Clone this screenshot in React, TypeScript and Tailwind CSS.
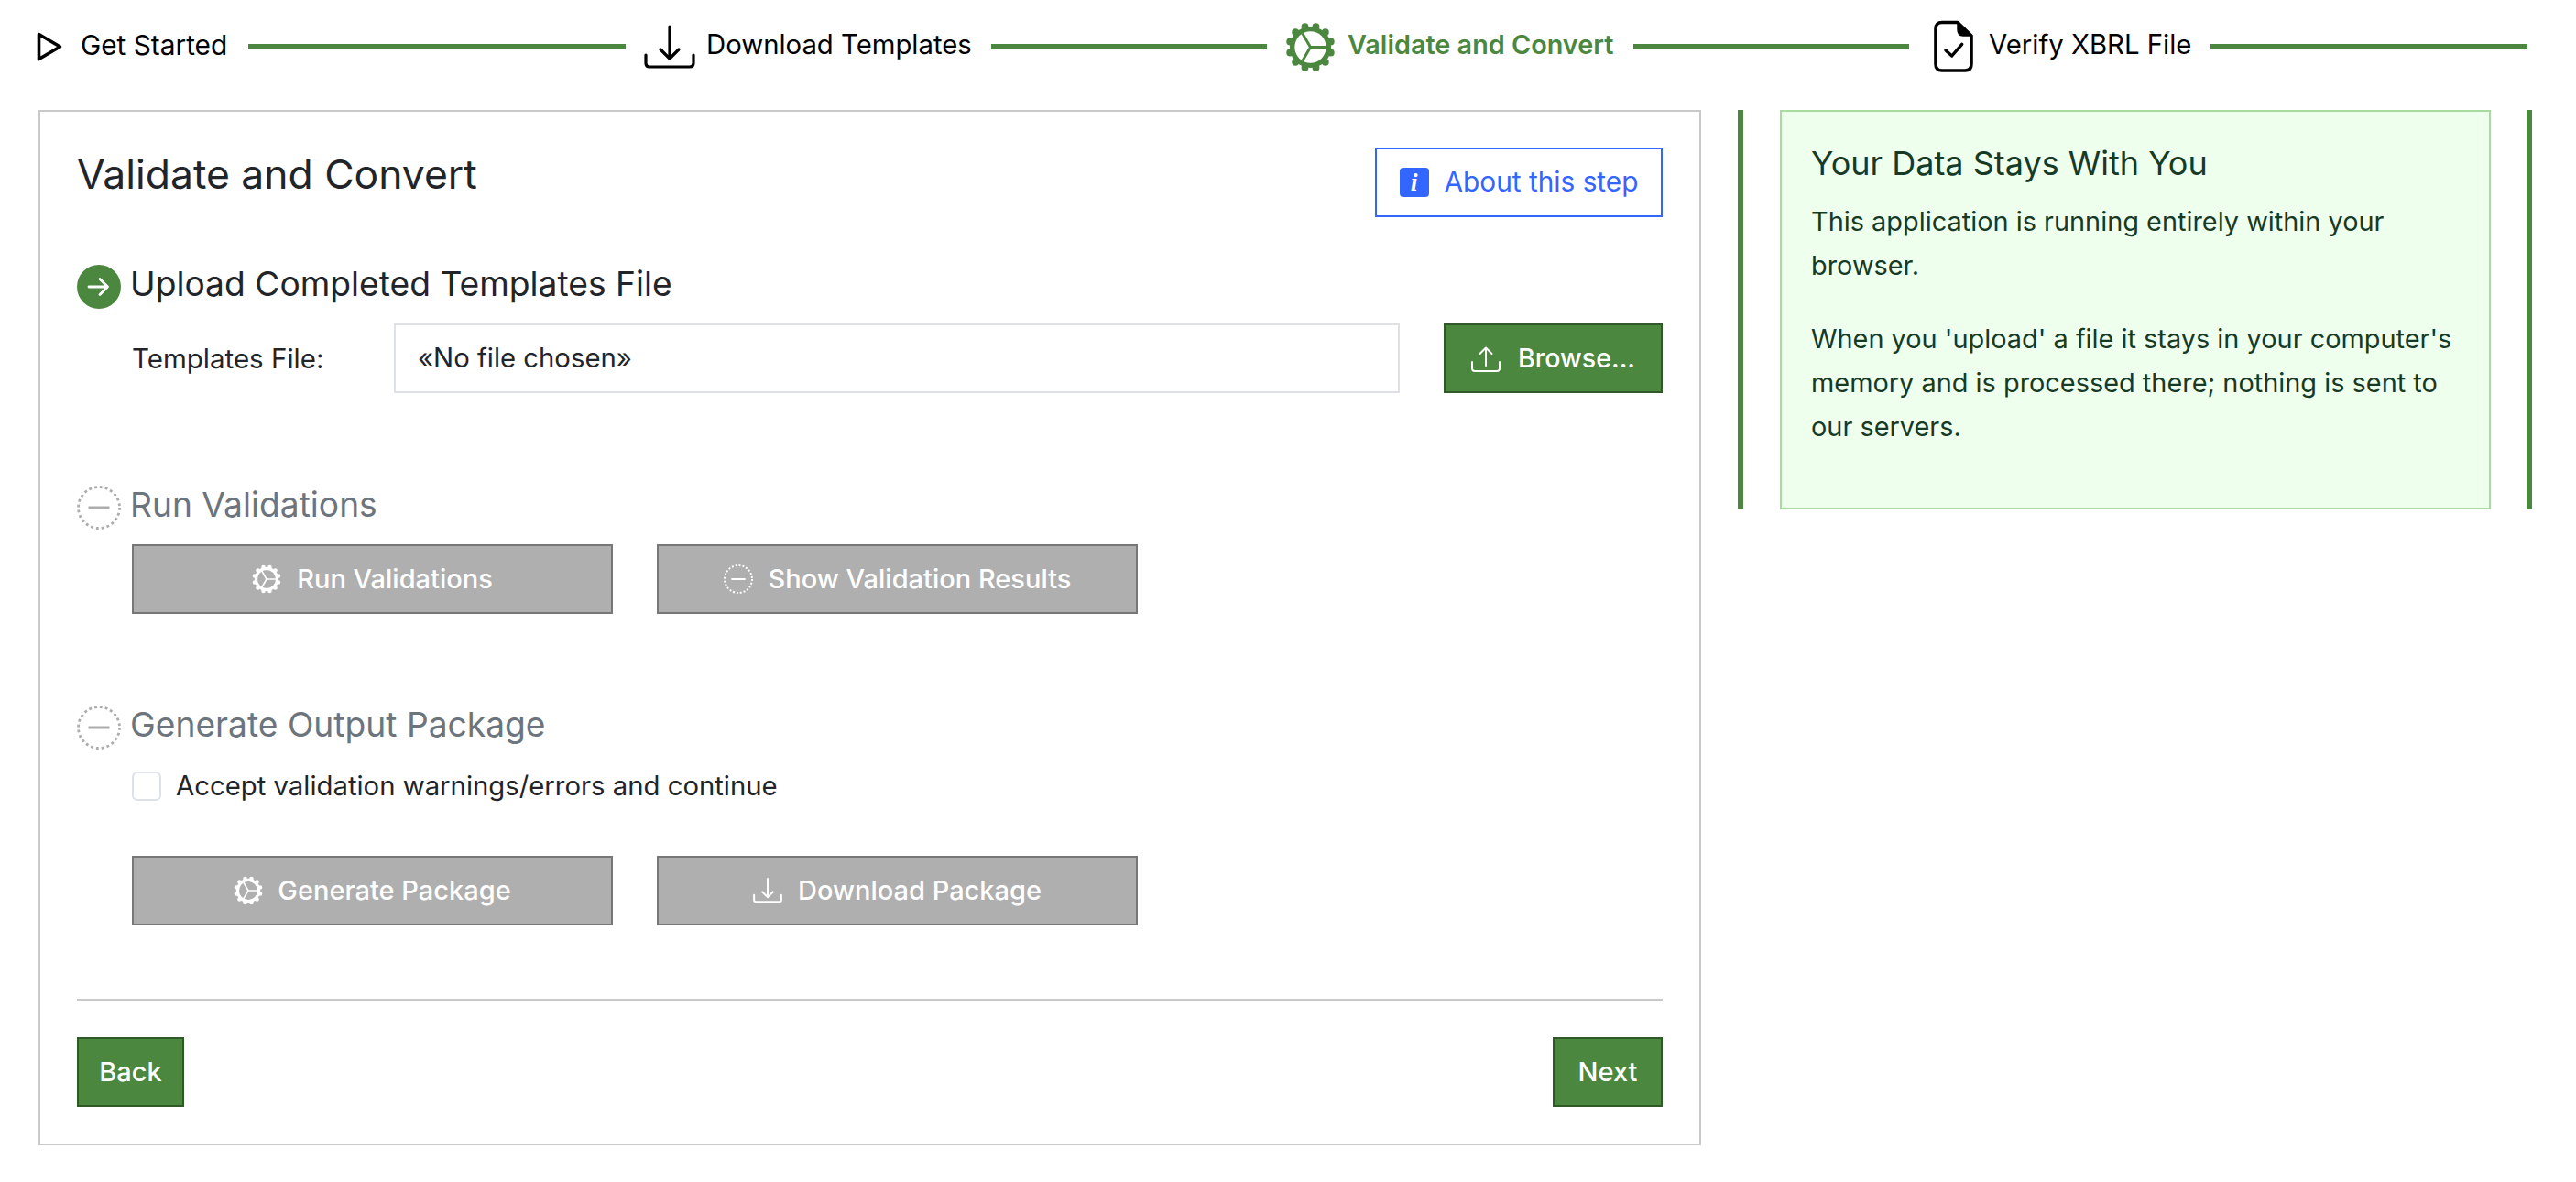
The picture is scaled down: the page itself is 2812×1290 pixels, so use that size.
const GREEN = '#4c873f'

function PlayIcon() {
  return (
    <svg width="28" height="32" viewBox="0 0 28 32" fill="none" stroke="#000" strokeWidth="3.6" strokeLinejoin="round">
      <path d="M2.5 2.5 L25.5 16 L2.5 29.5 Z" />
    </svg>
  )
}

function DownloadIcon({ size = 56, color = '#000', sw = 3.2 }: { size?: number; color?: string; sw?: number }) {
  return (
    <svg width={size} height={size * 48 / 56} viewBox="0 0 56 48" fill="none" stroke={color} strokeWidth={sw} strokeLinecap="round" strokeLinejoin="round">
      <path d="M28 2 V37 M18 27 L28 37 L38 27" />
      <path d="M2 33 V42 Q2 46 6 46 H50 Q54 46 54 42 V33" />
    </svg>
  )
}

function UploadIcon() {
  return (
    <svg width="32" height="28" viewBox="0 0 32 28" fill="none" stroke="#fff" strokeWidth="2" strokeLinecap="round" strokeLinejoin="round" className="mt-[2px]">
      <path d="M16 1.5 V21 M9.5 8 L16 1.5 L22.5 8" />
      <path d="M1 17 V24 Q1 27 4 27 H28 Q31 27 31 24 V17" />
    </svg>
  )
}

// gear with twelve teeth and three spokes
function GearIcon({ size, color, hole }: { size: number; color: string; hole: string }) {
  const teeth = Array.from({ length: 12 }, (_, i) => (i * Math.PI) / 6 + Math.PI / 12)
  return (
    <svg width={size} height={size} viewBox="-28 -28 56 56">
      <circle r="23" fill={color} />
      {teeth.map((a) => (
        <circle key={a} cx={Math.cos(a) * 23.5} cy={Math.sin(a) * 23.5} r="4" fill={color} />
      ))}
      <circle r="17.5" fill={hole} />
      <path d="M0 0 H18 M0 0 L-9 -15.6 M0 0 L-9 15.6" stroke={color} strokeWidth="3" fill="none" />
    </svg>
  )
}

function FileCheckIcon() {
  return (
    <svg width="46" height="60" viewBox="0 0 46 60" fill="none" stroke="#000" strokeLinecap="round" strokeLinejoin="round">
      <path d="M10 3.5 H27 L42 18 V49 Q42 56 35 56 H10 Q3 56 3 49 V10.5 Q3 3.5 10 3.5 Z" strokeWidth="3.6" />
      <path d="M27 3.5 L42 18 H33 Q27 18 27 11 Z" fill="#000" strokeWidth="1.5" />
      <path d="M14 34 L20.7 40 L31.7 27.3" strokeWidth="3.4" />
    </svg>
  )
}

function DottedMinus({ size, color, sw }: { size: number; color: string; sw: number }) {
  return (
    <svg width={size} height={size} viewBox="0 0 48 48" fill="none" stroke={color}>
      <circle cx="24" cy="24" r="22.5" strokeWidth={sw} strokeDasharray="2.9 3" />
      <path d="M12.5 24 H35.5" strokeWidth="3" />
    </svg>
  )
}

function ArrowCircle() {
  return (
    <svg width="48" height="48" viewBox="0 0 48 48" fill="none" className="shrink-0">
      <circle cx="24" cy="24" r="24" fill={GREEN} />
      <path d="M13 24 H33.5 M25 15.5 L33.5 24 L25 32.5" stroke="#fff" strokeWidth="2.8" strokeLinecap="round" strokeLinejoin="round" />
    </svg>
  )
}

function SectionHead({ title, active }: { title: string; active?: boolean }) {
  return (
    <div className="flex h-12 items-center gap-[10px]">
      {active ? <ArrowCircle /> : <DottedMinus size={48} color="#adadad" sw={2.8} />}
      <h2 className={`-mt-[7px] text-[37.2px] font-normal leading-[48px] ${active ? 'text-[#212529]' : 'text-[#6c757d]'}`}>{title}</h2>
    </div>
  )
}

function GrayButton({ icon, label, gap }: { icon: React.ReactNode; label: string; gap: string }) {
  return (
    <button className={`flex h-[76px] w-[525px] items-center justify-center ${gap} border-2 border-[#777777] bg-[#afafaf] text-[29px] font-medium text-white`}>
      {icon}
      <span>{label}</span>
    </button>
  )
}

function GreenButton({ label, width }: { label: string; width: string }) {
  return (
    <button className={`flex h-[76px] ${width} items-center justify-center border-2 border-[#2f5a28] bg-[#4c873f] text-[29px] font-medium text-white`}>
      {label}
    </button>
  )
}

function Line({ width }: { width: string }) {
  return <div className={`h-[6px] ${width} bg-[#4c873f]`} />
}

function Stepper() {
  return (
    <div className="flex h-[102px] items-center whitespace-nowrap pl-10 text-[29.3px] text-black">
      <PlayIcon />
      <span className="ml-5 w-[162px] -mt-1 text-[29.8px]">Get Started</span>
      <div className="ml-[21px]"><Line width="w-[412px]" /></div>
      <div className="ml-[20px]"><DownloadIcon /></div>
      <span className="ml-3 w-[290px] -mt-1">Download Templates</span>
      <div className="ml-[21px]"><Line width="w-[301px]" /></div>
      <div className="ml-5"><GearIcon size={55} color={GREEN} hole="#fff" /></div>
      <span className="ml-[13px] w-[292px] -mt-1 text-[28.8px] font-semibold text-[#4c873f]">Validate and Convert</span>
      <div className="ml-5"><Line width="w-[301px]" /></div>
      <div className="ml-[26px]"><FileCheckIcon /></div>
      <span className="ml-[15px] w-[222px] -mt-1">Verify XBRL File</span>
      <div className="ml-5"><Line width="w-[346px]" /></div>
    </div>
  )
}

export default function App() {
  return (
    <div className="min-h-[1290px] bg-white font-['Inter',sans-serif] font-[420] text-[#212529]">
      <Stepper />
      <div className="mt-[18px] flex items-start pl-[42px]">
        <main className="w-[1815px] border-2 border-[#c9c9c9] px-10 pb-10 pt-[39px]">
          <div className="flex items-start justify-between">
            <h1 className="text-[44.4px] font-normal leading-[58px]">Validate and Convert</h1>
            <button className="flex h-[76px] w-[314px] items-center justify-center gap-[17px] border-2 border-[#3366ff] text-[29.8px] text-[#3366ff]">
              <span className="flex h-8 w-8 items-center justify-center rounded-[4px] bg-[#3366ff] font-['Liberation_Serif',serif] text-[28px] font-bold italic leading-none text-white">i</span>
              <span className="-mt-[1px]">About this step</span>
            </button>
          </div>

          <section className="mt-[52px]">
            <SectionHead title="Upload Completed Templates File" active />
            <div className="mt-4 flex items-center pl-[60px]">
              <label className="w-[286px] text-[29.5px]">Templates File:</label>
              <div className="flex h-[76px] w-[1098px] items-center border-2 border-[#dee2e6] pl-[24px] text-[29.3px]">«No file chosen»</div>
              <button className="ml-12 flex h-[76px] w-[239px] items-center justify-center gap-[19px] border-2 border-[#2f5a28] bg-[#4c873f] text-[28.6px] font-medium text-white">
                <UploadIcon />
                <span>Browse...</span>
              </button>
            </div>
          </section>

          <section className="mt-[101px]">
            <SectionHead title="Run Validations" />
            <div className="mt-4 flex gap-12 pl-[60px]">
              <GrayButton icon={<GearIcon size={32} color="#fff" hole="#afafaf" />} label="Run Validations" gap="gap-[17px]" />
              <GrayButton icon={<DottedMinus size={32} color="#fff" sw={3} />} label="Show Validation Results" gap="gap-[17px]" />
            </div>
          </section>

          <section className="mt-[100px]">
            <SectionHead title="Generate Output Package" />
            <div className="mt-6 flex h-8 items-center gap-4 pl-[60px]">
              <input type="checkbox" className="h-8 w-8 appearance-none rounded-[6px] border-2 border-[#dee2e6] bg-white" />
              <span className="text-[29.3px]">Accept validation warnings/errors and continue</span>
            </div>
            <div className="mt-[60px] flex gap-12 pl-[60px]">
              <GrayButton icon={<GearIcon size={32} color="#fff" hole="#afafaf" />} label="Generate Package" gap="gap-4" />
              <GrayButton icon={<DownloadIcon size={32} color="#fff" sw={3.6} />} label="Download Package" gap="gap-[17px]" />
            </div>
          </section>

          <hr className="mt-20 border-t-2 border-[#c9c9c9]" />

          <div className="mt-10 flex justify-between">
            <GreenButton label="Back" width="w-[117px]" />
            <GreenButton label="Next" width="w-[120px]" />
          </div>
        </main>

        <aside className="ml-[40px] h-[436px] w-[867px] border-x-[6px] border-[#4c873f] pl-[40px] pr-[39px]">
          <div className="h-full border-2 border-[#a8dba0] bg-[#eeffee] px-8 pt-8 text-[#173a26]">
            <h3 className="mb-4 text-[36px] font-normal leading-[48px]">Your Data Stays With You</h3>
            <p className="text-[28.9px] leading-[48px]">This application is running entirely within your browser.</p>
            <p className="mt-8 text-[28.9px] leading-[48px]">When you 'upload' a file it stays in your computer's memory and is processed there; nothing is sent to our servers.</p>
          </div>
        </aside>
      </div>
    </div>
  )
}
